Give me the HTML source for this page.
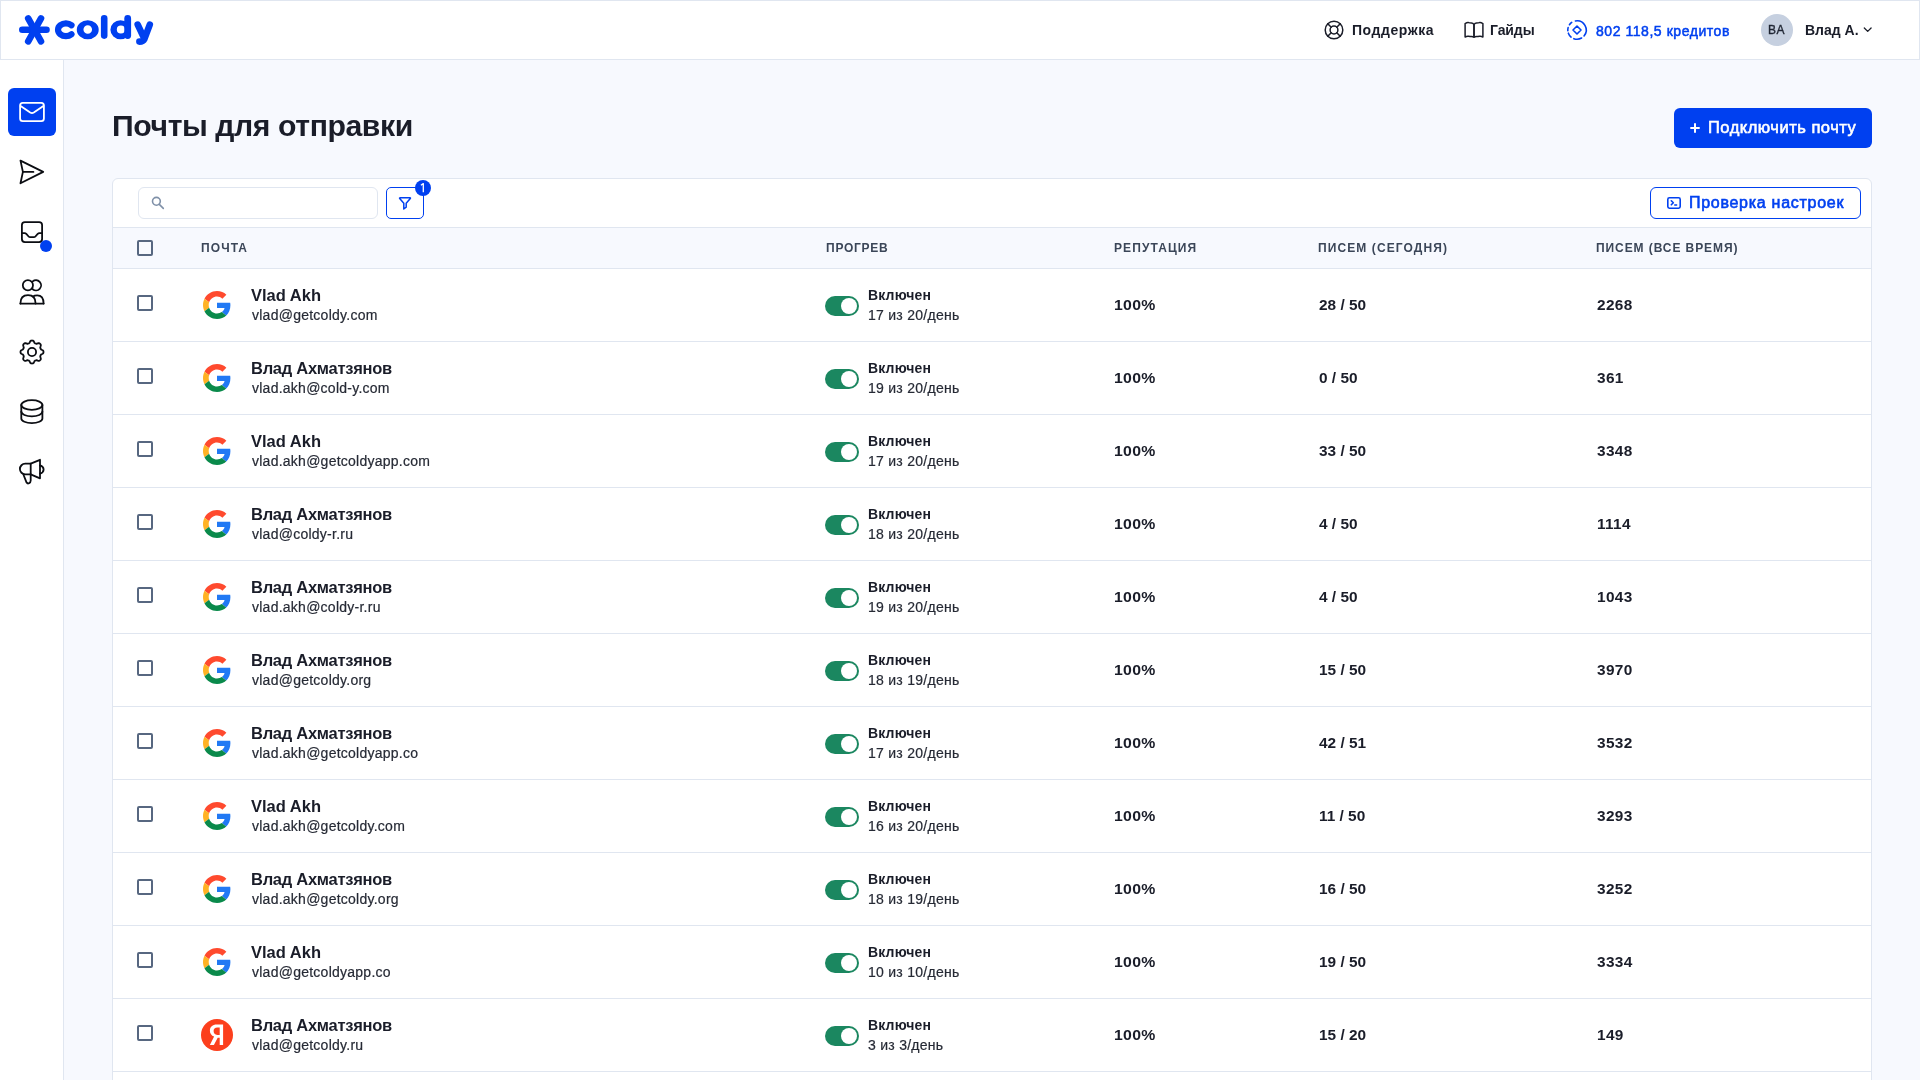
<!DOCTYPE html>
<html><head><meta charset="utf-8">
<style>
*{margin:0;padding:0;box-sizing:border-box}
html,body{width:1920px;height:1080px;overflow:hidden;background:#f7f9fe;font-family:"Liberation Sans",sans-serif;color:#1a1d29}
.abs{position:absolute}
.t{position:absolute;white-space:nowrap;line-height:1;will-change:transform}
#hdr{position:absolute;left:0;top:0;width:1920px;height:60px;background:#fff;border:1px solid #e0e6f0}
#side{position:absolute;left:0;top:60px;width:64px;height:1020px;background:#fff;border-right:1px solid #e0e6f0}
#addbtn{position:absolute;left:1674px;top:108px;width:198px;height:40px;background:#0040f0;border-radius:6px}
#card{position:absolute;left:112px;top:178px;width:1760px;height:1000px;background:#fff;border:1px solid #e0e6f0;border-radius:6px}
#search{position:absolute;left:138px;top:187px;width:240px;height:32px;border:1px solid #e0e6f0;border-radius:6px;background:#fff}
#filter{position:absolute;left:386px;top:187px;width:38px;height:32px;border:1px solid #0040f0;border-radius:5px;background:#fff}
#badge{position:absolute;left:415px;top:180px;width:16px;height:16px;border-radius:50%;background:#0040f0;color:#fff;font-size:11px;line-height:16px;text-align:center}
#check{position:absolute;left:1650px;top:187px;width:211px;height:32px;border:1px solid #0040f0;border-radius:6px;background:#fff}
#thead{position:absolute;left:113px;top:227px;width:1758px;height:42px;background:#f7f9fe;border-top:1px solid #e0e6f0;border-bottom:1px solid #e0e6f0}
.row{position:absolute;left:113px;width:1758px;height:73px;background:#fff;border-bottom:1px solid #e0e6f0}
.cb{width:16px;height:16px;border:2px solid #576780;border-radius:2px;background:#fff}
.tg{position:absolute;width:34px;height:20px;border-radius:10px;background:#1b8760}
.kn{position:absolute;left:16px;top:2px;width:16px;height:16px;border-radius:50%;background:#fff}
</style></head><body>

<div id="hdr"></div>

<svg class="abs" style="left:0;top:0" width="170" height="60" viewBox="0 0 170 60">
 <g stroke="#0040f0" stroke-width="6.6" stroke-linecap="round" fill="none">
  <path d="M22.3 29.7 H46.5"/>
  <path d="M28.2 18.4 L41 41.4"/>
  <path d="M41 18.4 L28.2 41.4"/>
  <path d="M71.5 25.25 A7.9 6.35 0 1 0 71.5 34.25" stroke-width="6.2"/>
  <path d="M104.2 18.4 V35.6"/>
  <path d="M127.7 18.5 V35.5" stroke-width="6.8"/>
  <path d="M137.7 24.6 L143.6 37.2"/>
  <path d="M149.8 24.6 L144.2 39.4 Q143.2 41.6 139.4 41.6"/>
 </g>
 <path fill-rule="evenodd" fill="#0040f0" d="M76.8 29.75 a10.95 9.55 0 1 0 21.9 0 a10.95 9.55 0 1 0 -21.9 0 Z M83.45 29.5 a4.3 4.3 0 1 1 8.6 0 a4.3 4.3 0 1 1 -8.6 0 Z"/>
 <path fill-rule="evenodd" fill="#0040f0" d="M110.4 29.75 a10.1 9.55 0 1 0 20.2 0 a10.1 9.55 0 1 0 -20.2 0 Z M116.8 29.5 a4.1 4.1 0 1 1 8.2 0 a4.1 4.1 0 1 1 -8.2 0 Z"/>
</svg>
<div class="t" style="left:1351.5px;top:22.95px;font-size:14px;font-weight:bold;letter-spacing:0.55px;">Поддержка</div>
<div class="t" style="left:1490px;top:22.95px;font-size:14px;font-weight:bold;letter-spacing:-0.1px;">Гайды</div>
<div class="t" style="left:1595.5px;top:23.95px;font-size:14px;font-weight:normal;color:#0040f0;letter-spacing:0.55px;-webkit-text-stroke:0.5px #0040f0">802 118,5 кредитов</div>
<div class="abs" style="left:1761px;top:14px;width:32px;height:32px;border-radius:50%;background:#c6d0e0"></div>
<div class="t" style="left:1768.3px;top:24.34px;font-size:12px;font-weight:normal;color:#1f2533;letter-spacing:0.5px;-webkit-text-stroke:0.35px #1f2533">BA</div>
<div class="t" style="left:1805px;top:22.95px;font-size:14px;font-weight:bold;">Влад А.</div>

<svg class="abs" style="left:1300px;top:0" width="620" height="60" viewBox="1300 0 620 60">
 <g fill="none" stroke="#1a1d29" stroke-width="1.5" stroke-linecap="round" stroke-linejoin="round">
  <circle cx="1334" cy="30" r="8.8"/>
  <circle cx="1334" cy="30" r="3.9"/>
  <path d="M1327.8 23.8 L1331.2 27.2 M1340.2 23.8 L1336.8 27.2 M1327.8 36.2 L1331.2 32.8 M1340.2 36.2 L1336.8 32.8"/>
 </g>
 <g fill="none" stroke="#1a1d29" stroke-width="1.5" stroke-linecap="round" stroke-linejoin="round">
  <path d="M1474 24.6 Q1473 22.9 1471.5 22.9 Q1469.5 22.9 1468.5 22.6 Q1467.2 22.3 1465.1 23.6 V37 Q1467 36 1468.5 36.3 Q1470 36.6 1471.5 36.6 Q1473 36.6 1474 37.2 Z"/>
  <path d="M1474 24.6 Q1475 22.9 1476.5 22.9 Q1478.5 22.9 1479.5 22.6 Q1480.8 22.3 1482.9 23.6 V37 Q1481 36 1479.5 36.3 Q1478 36.6 1476.5 36.6 Q1475 36.6 1474 37.2 Z"/>
 </g>
 <g fill="none" stroke="#0040f0" stroke-width="1.6" stroke-linecap="round" stroke-linejoin="round">
  <path d="M1575.4 20.94 A9.2 9.2 0 0 1 1584.05 35.91"/>
  <path d="M1581.6 37.97 A9.2 9.2 0 0 1 1573.85 38.65"/>
  <path d="M1571.09 37.05 A9.2 9.2 0 0 1 1568.35 33.15"/>
  <path d="M1567.83 30.8 A9.2 9.2 0 0 1 1568.11 27.62"/>
  <path d="M1569.46 24.72 A9.2 9.2 0 0 1 1571.72 22.46"/>
  <path d="M1577 26 L1581 30 L1577 34 L1573 30 Z"/>
 </g>
 <path d="M1864.3 28 L1867.7 31.4 L1871.1 28" fill="none" stroke="#1a1d29" stroke-width="1.3" stroke-linecap="round" stroke-linejoin="round"/>
</svg>

<div id="side"></div>
<div class="abs" style="left:8px;top:88px;width:48px;height:48px;border-radius:6px;background:#0040f0"></div>

<svg class="abs" style="left:0;top:0" width="64" height="500" viewBox="0 0 64 500">
 <!-- mail (white) -->
 <g fill="none" stroke="#fff" stroke-width="1.8" stroke-linecap="round" stroke-linejoin="round">
  <rect x="20.1" y="102.9" width="23.8" height="18.3" rx="2.6"/>
  <path d="M20.6 106 L30.2 112.6 Q32 113.7 33.8 112.6 L43.4 106"/>
 </g>
 <!-- send -->
 <g fill="none" stroke="#0b0d12" stroke-width="1.8" stroke-linecap="round" stroke-linejoin="round">
  <path d="M20.5 160.6 L43.2 171.9 L20.5 183.3 L22.9 171.9 Z"/>
  <path d="M22.9 171.9 H33.4"/>
 </g>
 <!-- inbox -->
 <g fill="none" stroke="#0b0d12" stroke-width="1.8" stroke-linecap="round" stroke-linejoin="round">
  <rect x="21.9" y="222.1" width="20.2" height="20" rx="3"/>
  <path d="M21.9 233.2 H24.6 Q25.6 233.2 26.3 233.9 L28.6 236.5 Q29.2 237.2 30.2 237.2 H33.8 Q34.8 237.2 35.4 236.5 L37.7 233.9 Q38.4 233.2 39.4 233.2 H42.1"/>
 </g>
 <!-- users -->
 <g fill="none" stroke="#0b0d12" stroke-width="1.8" stroke-linecap="round" stroke-linejoin="round">
  <circle cx="27.9" cy="285.3" r="5.1"/>
  <path d="M32.7 281.4 A5.1 5.1 0 1 1 32.7 289.2"/>
  <path d="M20.4 303.6 Q20.4 295.2 28 295.2 Q35.6 295.2 35.6 303.6"/>
  <path d="M33 296.5 Q34.5 295.3 37.2 295.3 Q43.6 295.3 43.6 303.6"/>
  <path d="M20.4 303.6 H43.6"/>
 </g>
 <!-- gear -->
 <g fill="none" stroke="#0b0d12" stroke-width="1.8" stroke-linecap="round" stroke-linejoin="round">
  <path d="M43.50 352.00 L43.47 352.45 L43.38 352.90 L43.17 353.32 L42.77 353.71 L42.15 354.02 L41.53 354.29 L41.10 354.57 L40.83 354.87 L40.65 355.19 L40.50 355.52 L40.37 355.86 L40.27 356.22 L40.25 356.62 L40.36 357.12 L40.61 357.75 L40.82 358.41 L40.83 358.96 L40.68 359.41 L40.43 359.79 L40.13 360.13 L39.79 360.43 L39.41 360.68 L38.96 360.83 L38.41 360.82 L37.75 360.61 L37.12 360.36 L36.62 360.25 L36.22 360.27 L35.86 360.37 L35.52 360.50 L35.19 360.65 L34.87 360.83 L34.57 361.10 L34.29 361.53 L34.02 362.15 L33.71 362.77 L33.32 363.17 L32.90 363.38 L32.45 363.47 L32.00 363.50 L31.55 363.47 L31.10 363.38 L30.68 363.17 L30.29 362.77 L29.98 362.15 L29.71 361.53 L29.43 361.10 L29.13 360.83 L28.81 360.65 L28.48 360.50 L28.14 360.37 L27.78 360.27 L27.38 360.25 L26.88 360.36 L26.25 360.61 L25.59 360.82 L25.04 360.83 L24.59 360.68 L24.21 360.43 L23.87 360.13 L23.57 359.79 L23.32 359.41 L23.17 358.96 L23.18 358.41 L23.39 357.75 L23.64 357.12 L23.75 356.62 L23.73 356.22 L23.63 355.86 L23.50 355.52 L23.35 355.19 L23.17 354.87 L22.90 354.57 L22.47 354.29 L21.85 354.02 L21.23 353.71 L20.83 353.32 L20.62 352.90 L20.53 352.45 L20.50 352.00 L20.53 351.55 L20.62 351.10 L20.83 350.68 L21.23 350.29 L21.85 349.98 L22.47 349.71 L22.90 349.43 L23.17 349.13 L23.35 348.81 L23.50 348.48 L23.63 348.14 L23.73 347.78 L23.75 347.38 L23.64 346.88 L23.39 346.25 L23.18 345.59 L23.17 345.04 L23.32 344.59 L23.57 344.21 L23.87 343.87 L24.21 343.57 L24.59 343.32 L25.04 343.17 L25.59 343.18 L26.25 343.39 L26.88 343.64 L27.38 343.75 L27.78 343.73 L28.14 343.63 L28.48 343.50 L28.81 343.35 L29.13 343.17 L29.43 342.90 L29.71 342.47 L29.98 341.85 L30.29 341.23 L30.68 340.83 L31.10 340.62 L31.55 340.53 L32.00 340.50 L32.45 340.53 L32.90 340.62 L33.32 340.83 L33.71 341.23 L34.02 341.85 L34.29 342.47 L34.57 342.90 L34.87 343.17 L35.19 343.35 L35.52 343.50 L35.86 343.63 L36.22 343.73 L36.62 343.75 L37.12 343.64 L37.75 343.39 L38.41 343.18 L38.96 343.17 L39.41 343.32 L39.79 343.57 L40.13 343.87 L40.43 344.21 L40.68 344.59 L40.83 345.04 L40.82 345.59 L40.61 346.25 L40.36 346.88 L40.25 347.38 L40.27 347.78 L40.37 348.14 L40.50 348.48 L40.65 348.81 L40.83 349.13 L41.10 349.43 L41.53 349.71 L42.15 349.98 L42.77 350.29 L43.17 350.68 L43.38 351.10 L43.47 351.55 L43.50 352.00Z"/>
  <circle cx="32" cy="352" r="4.1"/>
 </g>
 <!-- database -->
 <g fill="none" stroke="#0b0d12" stroke-width="1.8" stroke-linecap="round" stroke-linejoin="round">
  <ellipse cx="31.85" cy="405" rx="10.55" ry="4.8"/>
  <path d="M21.3 405 V418.4 A10.55 4.7 0 0 0 42.4 418.4 V405"/>
  <path d="M21.3 411.6 A10.55 4.8 0 0 0 42.4 411.6"/>
 </g>
 <!-- megaphone -->
 <g fill="none" stroke="#0b0d12" stroke-width="1.8" stroke-linecap="round" stroke-linejoin="round">
  <path d="M30.7 463.7 H25.2 A5.3 5.3 0 0 0 25.2 474.3 H30.7 Z"/>
  <path d="M30.7 463.7 L40 459.8 V478.3 L30.7 474.3"/>
  <path d="M40 465.3 Q43.6 466.5 43.6 469.5 Q43.6 472.5 40 473.7"/>
  <path d="M23.4 474.5 L26.6 482.6 Q27.5 484 29 483.3 Q30.7 482.3 30.7 480.5 V474.3"/>
 </g>
</svg>
<div class="abs" style="left:40px;top:240px;width:12px;height:12px;border-radius:50%;background:#0040f0"></div>

<div class="t" style="left:111.5px;top:111.44px;font-size:30.2px;font-weight:bold;letter-spacing:-0.42px;">Почты для отправки</div>
<div id="addbtn"></div>
<svg class="abs" style="left:1688px;top:121px" width="14" height="14" viewBox="1688 121 14 14"><path d="M1695 123.3 V132.7 M1690.3 128 H1699.7" stroke="#fff" stroke-width="2" stroke-linecap="butt"/></svg>
<div class="t" style="left:1707.5px;top:119.03px;font-size:16.5px;font-weight:normal;color:#fff;letter-spacing:0.5px;-webkit-text-stroke:0.6px #fff">Подключить почту</div>

<div id="card"></div>
<div id="search"></div>
<div id="filter"></div>
<div id="badge"></div><svg class="abs" style="left:415px;top:180px" width="16" height="16" viewBox="415 180 16 16"><path d="M420.9 185.2 L423.3 183.6 V192.2" fill="none" stroke="#fff" stroke-width="1.3" stroke-linejoin="round"/></svg>
<div id="check"></div>
<div class="t" style="left:1688.5px;top:195.36px;font-size:16px;font-weight:normal;color:#0040f0;letter-spacing:0.72px;-webkit-text-stroke:0.6px #0040f0">Проверка настроек</div>

<svg class="abs" style="left:140px;top:185px" width="300" height="40" viewBox="140 185 300 40">
 <g fill="none" stroke="#7f90a8" stroke-width="1.6" stroke-linecap="round">
  <circle cx="156.4" cy="201.3" r="3.9"/>
  <path d="M159.3 204.4 L163.3 208.4"/>
 </g>
 <path d="M400.2 197.8 H410 Q410.8 197.8 410.3 198.5 L406.2 203.3 V207.2 L403.8 209 V203.3 L399.7 198.5 Q399.2 197.8 400.2 197.8 Z" fill="none" stroke="#0040f0" stroke-width="1.5" stroke-linejoin="round"/>
</svg>
<svg class="abs" style="left:1660px;top:190px" width="30" height="26" viewBox="1660 190 30 26">
 <g fill="none" stroke="#0040f0" stroke-width="1.6" stroke-linecap="round" stroke-linejoin="round">
  <rect x="1667.8" y="197.8" width="12.4" height="10.4" rx="1.6"/>
  <path d="M1671.3 200.8 L1673.3 202.8 L1671.3 204.8 M1674.8 205 H1676.6"/>
 </g>
</svg>

<div id="thead"></div>
<div class="cb abs" style="left:137px;top:240px;background:transparent"></div>
<div class="t" style="left:200.5px;top:241.84px;font-size:12px;font-weight:bold;color:#3b4658;letter-spacing:1.1px;">ПОЧТА</div>
<div class="t" style="left:826px;top:241.84px;font-size:12px;font-weight:bold;color:#3b4658;letter-spacing:0.75px;">ПРОГРЕВ</div>
<div class="t" style="left:1113.5px;top:241.84px;font-size:12px;font-weight:bold;color:#3b4658;letter-spacing:1.1px;">РЕПУТАЦИЯ</div>
<div class="t" style="left:1318.3px;top:241.84px;font-size:12px;font-weight:bold;color:#3b4658;letter-spacing:1.1px;">ПИСЕМ (СЕГОДНЯ)</div>
<div class="t" style="left:1596.3px;top:241.84px;font-size:12px;font-weight:bold;color:#3b4658;letter-spacing:0.92px;">ПИСЕМ (ВСЕ ВРЕМЯ)</div>

<div class="row" style="top:269px"></div>
<div class="cb abs" style="left:137px;top:295px"></div>
<svg class="abs" style="left:203px;top:291px" width="28" height="28" viewBox="0 0 48 48"><path fill="#FF4A2E" d="M24 9.5c3.54 0 6.71 1.22 9.21 3.6l6.85-6.85C35.9 2.38 30.47 0 24 0 14.62 0 6.51 5.38 2.56 13.22l7.98 6.19C12.43 13.72 17.74 9.5 24 9.5z"/><path fill="#2179F4" d="M46.98 24.55c0-1.570-.15-3.09-.38-4.55H24v9.02h12.94c-.58 2.96-2.26 5.48-4.78 7.18l7.73 6c4.510-4.18 7.090-10.36 7.090-17.65z"/><path fill="#FFB224" d="M10.53 28.59c-.48-1.45-.76-2.99-.76-4.59s.27-3.14.76-4.59l-7.98-6.19C.92 16.46 0 20.12 0 24c0 3.88.92 7.54 2.56 10.78l7.97-6.19z"/><path fill="#0A8A4B" d="M24 48c6.48 0 11.93-2.13 15.89-5.81l-7.73-6c-2.15 1.45-4.92 2.3-8.16 2.3-6.26 0-11.57-4.22-13.47-9.91l-7.98 6.19C6.51 42.62 14.62 48 24 48z"/></svg>
<div class="t" style="left:251px;top:287.03px;font-size:16.5px;font-weight:bold;">Vlad Akh</div>
<div class="t" style="left:251.5px;top:308.15px;font-size:14px;font-weight:normal;color:#262a35;letter-spacing:0.25px;-webkit-text-stroke:0.2px #262a35">vlad@getcoldy.com</div>
<div class="tg" style="left:825px;top:296px"><div class="kn"></div></div>
<div class="t" style="left:867.5px;top:288.15px;font-size:14px;font-weight:bold;letter-spacing:0.15px;">Включен</div>
<div class="t" style="left:868px;top:308.15px;font-size:14px;font-weight:normal;color:#262a35;letter-spacing:0.27px;-webkit-text-stroke:0.2px #262a35">17 из 20/день</div>
<div class="t" style="left:1113.6px;top:298.45px;font-size:14px;font-weight:bold;letter-spacing:0.25px;transform:scaleX(1.13);transform-origin:0 0">100%</div>
<div class="t" style="left:1319px;top:298.45px;font-size:14px;font-weight:bold;transform:scaleX(1.1);transform-origin:0 0">28 / 50</div>
<div class="t" style="left:1597.2px;top:298.45px;font-size:14px;font-weight:bold;letter-spacing:0.3px;transform:scaleX(1.1);transform-origin:0 0">2268</div>
<div class="row" style="top:342px"></div>
<div class="cb abs" style="left:137px;top:368px"></div>
<svg class="abs" style="left:203px;top:364px" width="28" height="28" viewBox="0 0 48 48"><path fill="#FF4A2E" d="M24 9.5c3.54 0 6.71 1.22 9.21 3.6l6.85-6.85C35.9 2.38 30.47 0 24 0 14.62 0 6.51 5.38 2.56 13.22l7.98 6.19C12.43 13.72 17.74 9.5 24 9.5z"/><path fill="#2179F4" d="M46.98 24.55c0-1.570-.15-3.09-.38-4.55H24v9.02h12.94c-.58 2.96-2.26 5.48-4.78 7.18l7.73 6c4.510-4.18 7.090-10.36 7.090-17.65z"/><path fill="#FFB224" d="M10.53 28.59c-.48-1.45-.76-2.99-.76-4.59s.27-3.14.76-4.59l-7.98-6.19C.92 16.46 0 20.12 0 24c0 3.88.92 7.54 2.56 10.78l7.97-6.19z"/><path fill="#0A8A4B" d="M24 48c6.48 0 11.93-2.13 15.89-5.81l-7.73-6c-2.15 1.45-4.92 2.3-8.16 2.3-6.26 0-11.57-4.22-13.47-9.91l-7.98 6.19C6.51 42.62 14.62 48 24 48z"/></svg>
<div class="t" style="left:251px;top:360.03px;font-size:16.5px;font-weight:bold;letter-spacing:-0.27px;">Влад Ахматзянов</div>
<div class="t" style="left:251.5px;top:381.15px;font-size:14px;font-weight:normal;color:#262a35;letter-spacing:0.25px;-webkit-text-stroke:0.2px #262a35">vlad.akh@cold-y.com</div>
<div class="tg" style="left:825px;top:369px"><div class="kn"></div></div>
<div class="t" style="left:867.5px;top:361.15px;font-size:14px;font-weight:bold;letter-spacing:0.15px;">Включен</div>
<div class="t" style="left:868px;top:381.15px;font-size:14px;font-weight:normal;color:#262a35;letter-spacing:0.27px;-webkit-text-stroke:0.2px #262a35">19 из 20/день</div>
<div class="t" style="left:1113.6px;top:371.45px;font-size:14px;font-weight:bold;letter-spacing:0.25px;transform:scaleX(1.13);transform-origin:0 0">100%</div>
<div class="t" style="left:1319px;top:371.45px;font-size:14px;font-weight:bold;transform:scaleX(1.1);transform-origin:0 0">0 / 50</div>
<div class="t" style="left:1597.2px;top:371.45px;font-size:14px;font-weight:bold;letter-spacing:0.3px;transform:scaleX(1.1);transform-origin:0 0">361</div>
<div class="row" style="top:415px"></div>
<div class="cb abs" style="left:137px;top:441px"></div>
<svg class="abs" style="left:203px;top:437px" width="28" height="28" viewBox="0 0 48 48"><path fill="#FF4A2E" d="M24 9.5c3.54 0 6.71 1.22 9.21 3.6l6.85-6.85C35.9 2.38 30.47 0 24 0 14.62 0 6.51 5.38 2.56 13.22l7.98 6.19C12.43 13.72 17.74 9.5 24 9.5z"/><path fill="#2179F4" d="M46.98 24.55c0-1.570-.15-3.09-.38-4.55H24v9.02h12.94c-.58 2.96-2.26 5.48-4.78 7.18l7.73 6c4.510-4.18 7.090-10.36 7.090-17.65z"/><path fill="#FFB224" d="M10.53 28.59c-.48-1.45-.76-2.99-.76-4.59s.27-3.14.76-4.59l-7.98-6.19C.92 16.46 0 20.12 0 24c0 3.88.92 7.54 2.56 10.78l7.97-6.19z"/><path fill="#0A8A4B" d="M24 48c6.48 0 11.93-2.13 15.89-5.81l-7.73-6c-2.15 1.45-4.92 2.3-8.16 2.3-6.26 0-11.57-4.22-13.47-9.91l-7.98 6.19C6.51 42.62 14.62 48 24 48z"/></svg>
<div class="t" style="left:251px;top:433.03px;font-size:16.5px;font-weight:bold;">Vlad Akh</div>
<div class="t" style="left:251.5px;top:454.15px;font-size:14px;font-weight:normal;color:#262a35;letter-spacing:0.25px;-webkit-text-stroke:0.2px #262a35">vlad.akh@getcoldyapp.com</div>
<div class="tg" style="left:825px;top:442px"><div class="kn"></div></div>
<div class="t" style="left:867.5px;top:434.15px;font-size:14px;font-weight:bold;letter-spacing:0.15px;">Включен</div>
<div class="t" style="left:868px;top:454.15px;font-size:14px;font-weight:normal;color:#262a35;letter-spacing:0.27px;-webkit-text-stroke:0.2px #262a35">17 из 20/день</div>
<div class="t" style="left:1113.6px;top:444.45px;font-size:14px;font-weight:bold;letter-spacing:0.25px;transform:scaleX(1.13);transform-origin:0 0">100%</div>
<div class="t" style="left:1319px;top:444.45px;font-size:14px;font-weight:bold;transform:scaleX(1.1);transform-origin:0 0">33 / 50</div>
<div class="t" style="left:1597.2px;top:444.45px;font-size:14px;font-weight:bold;letter-spacing:0.3px;transform:scaleX(1.1);transform-origin:0 0">3348</div>
<div class="row" style="top:488px"></div>
<div class="cb abs" style="left:137px;top:514px"></div>
<svg class="abs" style="left:203px;top:510px" width="28" height="28" viewBox="0 0 48 48"><path fill="#FF4A2E" d="M24 9.5c3.54 0 6.71 1.22 9.21 3.6l6.85-6.85C35.9 2.38 30.47 0 24 0 14.62 0 6.51 5.38 2.56 13.22l7.98 6.19C12.43 13.72 17.74 9.5 24 9.5z"/><path fill="#2179F4" d="M46.98 24.55c0-1.570-.15-3.09-.38-4.55H24v9.02h12.94c-.58 2.96-2.26 5.48-4.78 7.18l7.73 6c4.510-4.18 7.090-10.36 7.090-17.65z"/><path fill="#FFB224" d="M10.53 28.59c-.48-1.45-.76-2.99-.76-4.59s.27-3.14.76-4.59l-7.98-6.19C.92 16.46 0 20.12 0 24c0 3.88.92 7.54 2.56 10.78l7.97-6.19z"/><path fill="#0A8A4B" d="M24 48c6.48 0 11.93-2.13 15.89-5.81l-7.73-6c-2.15 1.45-4.92 2.3-8.16 2.3-6.26 0-11.57-4.22-13.47-9.91l-7.98 6.19C6.51 42.62 14.62 48 24 48z"/></svg>
<div class="t" style="left:251px;top:506.03px;font-size:16.5px;font-weight:bold;letter-spacing:-0.27px;">Влад Ахматзянов</div>
<div class="t" style="left:251.5px;top:527.15px;font-size:14px;font-weight:normal;color:#262a35;letter-spacing:0.25px;-webkit-text-stroke:0.2px #262a35">vlad@coldy-r.ru</div>
<div class="tg" style="left:825px;top:515px"><div class="kn"></div></div>
<div class="t" style="left:867.5px;top:507.15px;font-size:14px;font-weight:bold;letter-spacing:0.15px;">Включен</div>
<div class="t" style="left:868px;top:527.15px;font-size:14px;font-weight:normal;color:#262a35;letter-spacing:0.27px;-webkit-text-stroke:0.2px #262a35">18 из 20/день</div>
<div class="t" style="left:1113.6px;top:517.45px;font-size:14px;font-weight:bold;letter-spacing:0.25px;transform:scaleX(1.13);transform-origin:0 0">100%</div>
<div class="t" style="left:1319px;top:517.45px;font-size:14px;font-weight:bold;transform:scaleX(1.1);transform-origin:0 0">4 / 50</div>
<div class="t" style="left:1597.2px;top:517.45px;font-size:14px;font-weight:bold;letter-spacing:0.3px;transform:scaleX(1.1);transform-origin:0 0">1114</div>
<div class="row" style="top:561px"></div>
<div class="cb abs" style="left:137px;top:587px"></div>
<svg class="abs" style="left:203px;top:583px" width="28" height="28" viewBox="0 0 48 48"><path fill="#FF4A2E" d="M24 9.5c3.54 0 6.71 1.22 9.21 3.6l6.85-6.85C35.9 2.38 30.47 0 24 0 14.62 0 6.51 5.38 2.56 13.22l7.98 6.19C12.43 13.72 17.74 9.5 24 9.5z"/><path fill="#2179F4" d="M46.98 24.55c0-1.570-.15-3.09-.38-4.55H24v9.02h12.94c-.58 2.96-2.26 5.48-4.78 7.18l7.73 6c4.510-4.18 7.090-10.36 7.090-17.65z"/><path fill="#FFB224" d="M10.53 28.59c-.48-1.45-.76-2.99-.76-4.59s.27-3.14.76-4.59l-7.98-6.19C.92 16.46 0 20.12 0 24c0 3.88.92 7.54 2.56 10.78l7.97-6.19z"/><path fill="#0A8A4B" d="M24 48c6.48 0 11.93-2.13 15.89-5.81l-7.73-6c-2.15 1.45-4.92 2.3-8.16 2.3-6.26 0-11.57-4.22-13.47-9.91l-7.98 6.19C6.51 42.62 14.62 48 24 48z"/></svg>
<div class="t" style="left:251px;top:579.03px;font-size:16.5px;font-weight:bold;letter-spacing:-0.27px;">Влад Ахматзянов</div>
<div class="t" style="left:251.5px;top:600.15px;font-size:14px;font-weight:normal;color:#262a35;letter-spacing:0.25px;-webkit-text-stroke:0.2px #262a35">vlad.akh@coldy-r.ru</div>
<div class="tg" style="left:825px;top:588px"><div class="kn"></div></div>
<div class="t" style="left:867.5px;top:580.15px;font-size:14px;font-weight:bold;letter-spacing:0.15px;">Включен</div>
<div class="t" style="left:868px;top:600.15px;font-size:14px;font-weight:normal;color:#262a35;letter-spacing:0.27px;-webkit-text-stroke:0.2px #262a35">19 из 20/день</div>
<div class="t" style="left:1113.6px;top:590.45px;font-size:14px;font-weight:bold;letter-spacing:0.25px;transform:scaleX(1.13);transform-origin:0 0">100%</div>
<div class="t" style="left:1319px;top:590.45px;font-size:14px;font-weight:bold;transform:scaleX(1.1);transform-origin:0 0">4 / 50</div>
<div class="t" style="left:1597.2px;top:590.45px;font-size:14px;font-weight:bold;letter-spacing:0.3px;transform:scaleX(1.1);transform-origin:0 0">1043</div>
<div class="row" style="top:634px"></div>
<div class="cb abs" style="left:137px;top:660px"></div>
<svg class="abs" style="left:203px;top:656px" width="28" height="28" viewBox="0 0 48 48"><path fill="#FF4A2E" d="M24 9.5c3.54 0 6.71 1.22 9.21 3.6l6.85-6.85C35.9 2.38 30.47 0 24 0 14.62 0 6.51 5.38 2.56 13.22l7.98 6.19C12.43 13.72 17.74 9.5 24 9.5z"/><path fill="#2179F4" d="M46.98 24.55c0-1.570-.15-3.09-.38-4.55H24v9.02h12.94c-.58 2.96-2.26 5.48-4.78 7.18l7.73 6c4.510-4.18 7.090-10.36 7.090-17.65z"/><path fill="#FFB224" d="M10.53 28.59c-.48-1.45-.76-2.99-.76-4.59s.27-3.14.76-4.59l-7.98-6.19C.92 16.46 0 20.12 0 24c0 3.88.92 7.54 2.56 10.78l7.97-6.19z"/><path fill="#0A8A4B" d="M24 48c6.48 0 11.93-2.13 15.89-5.81l-7.73-6c-2.15 1.45-4.92 2.3-8.16 2.3-6.26 0-11.57-4.22-13.47-9.91l-7.98 6.19C6.51 42.62 14.62 48 24 48z"/></svg>
<div class="t" style="left:251px;top:652.03px;font-size:16.5px;font-weight:bold;letter-spacing:-0.27px;">Влад Ахматзянов</div>
<div class="t" style="left:251.5px;top:673.15px;font-size:14px;font-weight:normal;color:#262a35;letter-spacing:0.25px;-webkit-text-stroke:0.2px #262a35">vlad@getcoldy.org</div>
<div class="tg" style="left:825px;top:661px"><div class="kn"></div></div>
<div class="t" style="left:867.5px;top:653.15px;font-size:14px;font-weight:bold;letter-spacing:0.15px;">Включен</div>
<div class="t" style="left:868px;top:673.15px;font-size:14px;font-weight:normal;color:#262a35;letter-spacing:0.27px;-webkit-text-stroke:0.2px #262a35">18 из 19/день</div>
<div class="t" style="left:1113.6px;top:663.45px;font-size:14px;font-weight:bold;letter-spacing:0.25px;transform:scaleX(1.13);transform-origin:0 0">100%</div>
<div class="t" style="left:1319px;top:663.45px;font-size:14px;font-weight:bold;transform:scaleX(1.1);transform-origin:0 0">15 / 50</div>
<div class="t" style="left:1597.2px;top:663.45px;font-size:14px;font-weight:bold;letter-spacing:0.3px;transform:scaleX(1.1);transform-origin:0 0">3970</div>
<div class="row" style="top:707px"></div>
<div class="cb abs" style="left:137px;top:733px"></div>
<svg class="abs" style="left:203px;top:729px" width="28" height="28" viewBox="0 0 48 48"><path fill="#FF4A2E" d="M24 9.5c3.54 0 6.71 1.22 9.21 3.6l6.85-6.85C35.9 2.38 30.47 0 24 0 14.62 0 6.51 5.38 2.56 13.22l7.98 6.19C12.43 13.72 17.74 9.5 24 9.5z"/><path fill="#2179F4" d="M46.98 24.55c0-1.570-.15-3.09-.38-4.55H24v9.02h12.94c-.58 2.96-2.26 5.48-4.78 7.18l7.73 6c4.510-4.18 7.090-10.36 7.090-17.65z"/><path fill="#FFB224" d="M10.53 28.59c-.48-1.45-.76-2.99-.76-4.59s.27-3.14.76-4.59l-7.98-6.19C.92 16.46 0 20.12 0 24c0 3.88.92 7.54 2.56 10.78l7.97-6.19z"/><path fill="#0A8A4B" d="M24 48c6.48 0 11.93-2.13 15.89-5.81l-7.73-6c-2.15 1.45-4.92 2.3-8.16 2.3-6.26 0-11.57-4.22-13.47-9.91l-7.98 6.19C6.51 42.62 14.62 48 24 48z"/></svg>
<div class="t" style="left:251px;top:725.03px;font-size:16.5px;font-weight:bold;letter-spacing:-0.27px;">Влад Ахматзянов</div>
<div class="t" style="left:251.5px;top:746.15px;font-size:14px;font-weight:normal;color:#262a35;letter-spacing:0.25px;-webkit-text-stroke:0.2px #262a35">vlad.akh@getcoldyapp.co</div>
<div class="tg" style="left:825px;top:734px"><div class="kn"></div></div>
<div class="t" style="left:867.5px;top:726.15px;font-size:14px;font-weight:bold;letter-spacing:0.15px;">Включен</div>
<div class="t" style="left:868px;top:746.15px;font-size:14px;font-weight:normal;color:#262a35;letter-spacing:0.27px;-webkit-text-stroke:0.2px #262a35">17 из 20/день</div>
<div class="t" style="left:1113.6px;top:736.45px;font-size:14px;font-weight:bold;letter-spacing:0.25px;transform:scaleX(1.13);transform-origin:0 0">100%</div>
<div class="t" style="left:1319px;top:736.45px;font-size:14px;font-weight:bold;transform:scaleX(1.1);transform-origin:0 0">42 / 51</div>
<div class="t" style="left:1597.2px;top:736.45px;font-size:14px;font-weight:bold;letter-spacing:0.3px;transform:scaleX(1.1);transform-origin:0 0">3532</div>
<div class="row" style="top:780px"></div>
<div class="cb abs" style="left:137px;top:806px"></div>
<svg class="abs" style="left:203px;top:802px" width="28" height="28" viewBox="0 0 48 48"><path fill="#FF4A2E" d="M24 9.5c3.54 0 6.71 1.22 9.21 3.6l6.85-6.85C35.9 2.38 30.47 0 24 0 14.62 0 6.51 5.38 2.56 13.22l7.98 6.19C12.43 13.72 17.74 9.5 24 9.5z"/><path fill="#2179F4" d="M46.98 24.55c0-1.570-.15-3.09-.38-4.55H24v9.02h12.94c-.58 2.96-2.26 5.48-4.78 7.18l7.73 6c4.510-4.18 7.090-10.36 7.090-17.65z"/><path fill="#FFB224" d="M10.53 28.59c-.48-1.45-.76-2.99-.76-4.59s.27-3.14.76-4.59l-7.98-6.19C.92 16.46 0 20.12 0 24c0 3.88.92 7.54 2.56 10.78l7.97-6.19z"/><path fill="#0A8A4B" d="M24 48c6.48 0 11.93-2.13 15.89-5.81l-7.73-6c-2.15 1.45-4.92 2.3-8.16 2.3-6.26 0-11.57-4.22-13.47-9.91l-7.98 6.19C6.51 42.62 14.62 48 24 48z"/></svg>
<div class="t" style="left:251px;top:798.03px;font-size:16.5px;font-weight:bold;">Vlad Akh</div>
<div class="t" style="left:251.5px;top:819.15px;font-size:14px;font-weight:normal;color:#262a35;letter-spacing:0.25px;-webkit-text-stroke:0.2px #262a35">vlad.akh@getcoldy.com</div>
<div class="tg" style="left:825px;top:807px"><div class="kn"></div></div>
<div class="t" style="left:867.5px;top:799.15px;font-size:14px;font-weight:bold;letter-spacing:0.15px;">Включен</div>
<div class="t" style="left:868px;top:819.15px;font-size:14px;font-weight:normal;color:#262a35;letter-spacing:0.27px;-webkit-text-stroke:0.2px #262a35">16 из 20/день</div>
<div class="t" style="left:1113.6px;top:809.45px;font-size:14px;font-weight:bold;letter-spacing:0.25px;transform:scaleX(1.13);transform-origin:0 0">100%</div>
<div class="t" style="left:1319px;top:809.45px;font-size:14px;font-weight:bold;transform:scaleX(1.1);transform-origin:0 0">11 / 50</div>
<div class="t" style="left:1597.2px;top:809.45px;font-size:14px;font-weight:bold;letter-spacing:0.3px;transform:scaleX(1.1);transform-origin:0 0">3293</div>
<div class="row" style="top:853px"></div>
<div class="cb abs" style="left:137px;top:879px"></div>
<svg class="abs" style="left:203px;top:875px" width="28" height="28" viewBox="0 0 48 48"><path fill="#FF4A2E" d="M24 9.5c3.54 0 6.71 1.22 9.21 3.6l6.85-6.85C35.9 2.38 30.47 0 24 0 14.62 0 6.51 5.38 2.56 13.22l7.98 6.19C12.43 13.72 17.74 9.5 24 9.5z"/><path fill="#2179F4" d="M46.98 24.55c0-1.570-.15-3.09-.38-4.55H24v9.02h12.94c-.58 2.96-2.26 5.48-4.78 7.18l7.73 6c4.510-4.18 7.090-10.36 7.090-17.65z"/><path fill="#FFB224" d="M10.53 28.59c-.48-1.45-.76-2.99-.76-4.59s.27-3.14.76-4.59l-7.98-6.19C.92 16.46 0 20.12 0 24c0 3.88.92 7.54 2.56 10.78l7.97-6.19z"/><path fill="#0A8A4B" d="M24 48c6.48 0 11.93-2.13 15.89-5.81l-7.73-6c-2.15 1.45-4.92 2.3-8.16 2.3-6.26 0-11.57-4.22-13.47-9.91l-7.98 6.19C6.51 42.62 14.62 48 24 48z"/></svg>
<div class="t" style="left:251px;top:871.03px;font-size:16.5px;font-weight:bold;letter-spacing:-0.27px;">Влад Ахматзянов</div>
<div class="t" style="left:251.5px;top:892.15px;font-size:14px;font-weight:normal;color:#262a35;letter-spacing:0.25px;-webkit-text-stroke:0.2px #262a35">vlad.akh@getcoldy.org</div>
<div class="tg" style="left:825px;top:880px"><div class="kn"></div></div>
<div class="t" style="left:867.5px;top:872.15px;font-size:14px;font-weight:bold;letter-spacing:0.15px;">Включен</div>
<div class="t" style="left:868px;top:892.15px;font-size:14px;font-weight:normal;color:#262a35;letter-spacing:0.27px;-webkit-text-stroke:0.2px #262a35">18 из 19/день</div>
<div class="t" style="left:1113.6px;top:882.45px;font-size:14px;font-weight:bold;letter-spacing:0.25px;transform:scaleX(1.13);transform-origin:0 0">100%</div>
<div class="t" style="left:1319px;top:882.45px;font-size:14px;font-weight:bold;transform:scaleX(1.1);transform-origin:0 0">16 / 50</div>
<div class="t" style="left:1597.2px;top:882.45px;font-size:14px;font-weight:bold;letter-spacing:0.3px;transform:scaleX(1.1);transform-origin:0 0">3252</div>
<div class="row" style="top:926px"></div>
<div class="cb abs" style="left:137px;top:952px"></div>
<svg class="abs" style="left:203px;top:948px" width="28" height="28" viewBox="0 0 48 48"><path fill="#FF4A2E" d="M24 9.5c3.54 0 6.71 1.22 9.21 3.6l6.85-6.85C35.9 2.38 30.47 0 24 0 14.62 0 6.51 5.38 2.56 13.22l7.98 6.19C12.43 13.72 17.74 9.5 24 9.5z"/><path fill="#2179F4" d="M46.98 24.55c0-1.570-.15-3.09-.38-4.55H24v9.02h12.94c-.58 2.96-2.26 5.48-4.78 7.18l7.73 6c4.510-4.18 7.090-10.36 7.090-17.65z"/><path fill="#FFB224" d="M10.53 28.59c-.48-1.45-.76-2.99-.76-4.59s.27-3.14.76-4.59l-7.98-6.19C.92 16.46 0 20.12 0 24c0 3.88.92 7.54 2.56 10.78l7.97-6.19z"/><path fill="#0A8A4B" d="M24 48c6.48 0 11.93-2.13 15.89-5.81l-7.73-6c-2.15 1.45-4.92 2.3-8.16 2.3-6.26 0-11.57-4.22-13.47-9.91l-7.98 6.19C6.51 42.62 14.62 48 24 48z"/></svg>
<div class="t" style="left:251px;top:944.03px;font-size:16.5px;font-weight:bold;">Vlad Akh</div>
<div class="t" style="left:251.5px;top:965.15px;font-size:14px;font-weight:normal;color:#262a35;letter-spacing:0.25px;-webkit-text-stroke:0.2px #262a35">vlad@getcoldyapp.co</div>
<div class="tg" style="left:825px;top:953px"><div class="kn"></div></div>
<div class="t" style="left:867.5px;top:945.15px;font-size:14px;font-weight:bold;letter-spacing:0.15px;">Включен</div>
<div class="t" style="left:868px;top:965.15px;font-size:14px;font-weight:normal;color:#262a35;letter-spacing:0.27px;-webkit-text-stroke:0.2px #262a35">10 из 10/день</div>
<div class="t" style="left:1113.6px;top:955.45px;font-size:14px;font-weight:bold;letter-spacing:0.25px;transform:scaleX(1.13);transform-origin:0 0">100%</div>
<div class="t" style="left:1319px;top:955.45px;font-size:14px;font-weight:bold;transform:scaleX(1.1);transform-origin:0 0">19 / 50</div>
<div class="t" style="left:1597.2px;top:955.45px;font-size:14px;font-weight:bold;letter-spacing:0.3px;transform:scaleX(1.1);transform-origin:0 0">3334</div>
<div class="row" style="top:999px"></div>
<div class="cb abs" style="left:137px;top:1025px"></div>
<svg class="abs" style="left:201px;top:1019px" width="32" height="32" viewBox="0 0 32 32"><circle cx="16" cy="16" r="16" fill="#fc3f1d"/><path fill="#fff" fill-rule="evenodd" d="M22.1 5.6 V26 H18.7 V18.7 H16.7 L12.9 26 H8.9 L13.1 17.6 C10.5 16.6 8.9 14.5 8.9 11.7 C8.9 7.9 11.6 5.6 15.7 5.6 Z M18.7 8.4 H16.3 C13.9 8.4 12.6 9.7 12.6 12.1 C12.6 14.5 13.9 15.9 16.3 15.9 H18.7 Z"/></svg>
<div class="t" style="left:251px;top:1017.03px;font-size:16.5px;font-weight:bold;letter-spacing:-0.27px;">Влад Ахматзянов</div>
<div class="t" style="left:251.5px;top:1038.15px;font-size:14px;font-weight:normal;color:#262a35;letter-spacing:0.25px;-webkit-text-stroke:0.2px #262a35">vlad@getcoldy.ru</div>
<div class="tg" style="left:825px;top:1026px"><div class="kn"></div></div>
<div class="t" style="left:867.5px;top:1018.15px;font-size:14px;font-weight:bold;letter-spacing:0.15px;">Включен</div>
<div class="t" style="left:868px;top:1038.15px;font-size:14px;font-weight:normal;color:#262a35;letter-spacing:0.27px;-webkit-text-stroke:0.2px #262a35">3 из 3/день</div>
<div class="t" style="left:1113.6px;top:1028.45px;font-size:14px;font-weight:bold;letter-spacing:0.25px;transform:scaleX(1.13);transform-origin:0 0">100%</div>
<div class="t" style="left:1319px;top:1028.45px;font-size:14px;font-weight:bold;transform:scaleX(1.1);transform-origin:0 0">15 / 20</div>
<div class="t" style="left:1597.2px;top:1028.45px;font-size:14px;font-weight:bold;letter-spacing:0.3px;transform:scaleX(1.1);transform-origin:0 0">149</div>
<div class="row" style="top:1072px"></div>

</body></html>
